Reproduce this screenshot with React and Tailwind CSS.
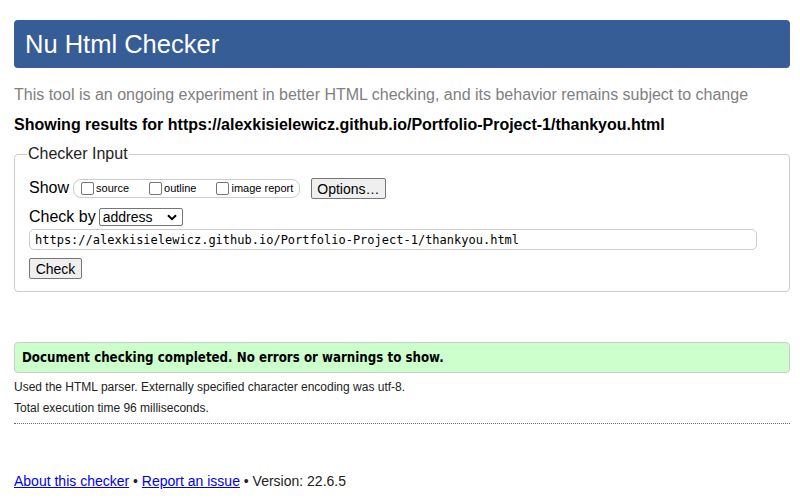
import React from 'react'

const Checkbox = ({ label }) => (
  <label className="flex items-center gap-[2px]">
    <span className="w-[13px] h-[13px] border border-[#767676] rounded-[2px] bg-white" />
    <span className="text-[11px] leading-none text-black">{label}</span>
  </label>
)

export default function App() {
  return (
    <div className="w-[800px] h-[500px] bg-white font-['Liberation_Sans',Arial,sans-serif] text-black overflow-hidden">
      <div className="ml-[14px] w-[776px] pt-[20px]">
        <h1 className="h-[48px] bg-[#365d95] rounded-[4px] flex items-center pl-[11px] text-white text-[25.5px]">
          Nu Html Checker
        </h1>

        <p className="mt-[17px] text-[16px] text-[#808080] leading-[20px]">
          This tool is an ongoing experiment in better HTML checking, and its behavior remains subject to change
        </p>
        <p className="mt-[10px] text-[16px] font-bold leading-[20px]">
          Showing results for https://alexkisielewicz.github.io/Portfolio-Project-1/thankyou.html
        </p>

        <fieldset className="mt-[10px] border border-[#cccccc] rounded-[4px] pl-[14px] pr-[32px] pb-[10px] pt-[14px]">
          <legend className="ml-[-2px] px-[1px] text-[16px] leading-[18px] text-[#222]">Checker Input</legend>

          <div className="flex items-center h-[22px]">
            <span className="text-[16px]">Show</span>
            <div className="ml-[4px] h-[19px] flex items-center gap-[20px] border border-[#cccccc] rounded-[8px] pl-[7px] pr-[6px]">
              <Checkbox label="source" />
              <Checkbox label="outline" />
              <Checkbox label="image report" />
            </div>
            <button className="ml-[11px] h-[21px] px-[5px] text-[14px] bg-[#efefef] border border-[#767676] rounded-[2px]">
              Options…
            </button>
          </div>

          <div className="flex items-center h-[22px] mt-[7px]">
            <span className="text-[16px]">Check by</span>
            <div className="ml-[3px] w-[84px] h-[18px] border border-[#767676] rounded-[2px] flex items-center justify-between pl-[3px] pr-[5px]">
              <span className="text-[14px] leading-none">address</span>
              <svg width="10" height="7" viewBox="0 0 10 7">
                <path d="M1 1.2 L5 5.2 L9 1.2" fill="none" stroke="#000" strokeWidth="2" />
              </svg>
            </div>
          </div>

          <div className="mt-[1px] h-[21px] border border-[#cccccc] rounded-[5px] flex items-center px-[5px] font-['DejaVu_Sans_Mono',monospace] text-[12px]">
            https://alexkisielewicz.github.io/Portfolio-Project-1/thankyou.html
          </div>

          <button className="mt-[8px] h-[21px] w-[53px] text-[14px] bg-[#efefef] border border-[#767676] rounded-[2px]">
            Check
          </button>
        </fieldset>

        <div className="mt-[50px] h-[31px] bg-[#ccffcc] border border-[#cccccc] rounded-[4px] flex items-center pl-[7px] font-['DejaVu_Sans_Condensed','DejaVu_Sans',Verdana,sans-serif] font-bold text-[13.2px]">
          Document checking completed. No errors or warnings to show.
        </div>

        <p className="mt-[4px] text-[12px] leading-[21px] text-[#222]">
          Used the HTML parser. Externally specified character encoding was utf-8.
        </p>
        <p className="text-[12px] leading-[21px] text-[#222]">Total execution time 96 milliseconds.</p>

        <div className="mt-[4px] border-t border-dotted border-[#666]" />

        <p className="mt-[47px] text-[14px] text-[#222]">
          <a href="#" className="text-[#0000ee] underline">About this checker</a>
          {' • '}
          <a href="#" className="text-[#0000ee] underline">Report an issue</a>
          {' • Version: 22.6.5'}
        </p>
      </div>
    </div>
  )
}
